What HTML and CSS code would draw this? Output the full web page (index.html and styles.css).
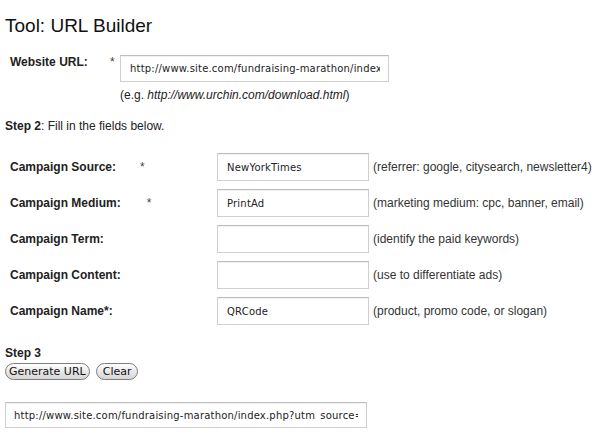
FILE: index.html
```html
<!DOCTYPE html>
<html lang="en">
<head>
    <meta charset="UTF-8">
    <title>Tool: URL Builder</title>
    <link rel="stylesheet" href="styles.css">
</head>
<body>
    <h1>Tool: URL Builder</h1>

    <div class="site-row">
        <label for="site-url" class="site-label">Website URL:</label>
        <span class="req">*</span>
        <input type="text" id="site-url" class="field site-field" value="http://www.site.com/fundraising-marathon/index.php">
    </div>
    <p class="example">(e.g. <i>http://www.urchin.com/download.html</i>)</p>

    <p class="step"><b>Step 2</b>: Fill in the fields below.</p>

    <div class="fields">
        <label class="name">Campaign Source:<span class="req req-source">*</span></label>
        <input type="text" class="field" value="NewYorkTimes">
        <span class="hint">(referrer: google, citysearch, newsletter4)</span>

        <label class="name">Campaign Medium:<span class="req req-medium">*</span></label>
        <input type="text" class="field" value="PrintAd">
        <span class="hint">(marketing medium: cpc, banner, email)</span>

        <label class="name">Campaign Term:</label>
        <input type="text" class="field" value="">
        <span class="hint">(identify the paid keywords)</span>

        <label class="name">Campaign Content:</label>
        <input type="text" class="field" value="">
        <span class="hint">(use to differentiate ads)</span>

        <label class="name">Campaign Name*:</label>
        <input type="text" class="field" value="QRCode">
        <span class="hint">(product, promo code, or slogan)</span>
    </div>

    <p class="step step3"><b>Step 3</b></p>
    <div class="buttons">
        <button type="button" class="btn">Generate URL</button>
        <button type="button" class="btn btn-clear">Clear</button>
    </div>

    <input type="text" class="field result" value="http://www.site.com/fundraising-marathon/index.php?utm_source=NewYorkTimes&amp;utm_medium=PrintAd&amp;utm_campaign=QRCode">
</body>
</html>
```

FILE: styles.css
```css
body {
    margin: 0;
    font-family: "Liberation Sans", Arial, sans-serif;
    font-size: 12px;
    line-height: 14px;
    color: #222;
    background: #fff;
}
h1 {
    margin: 14px 0 0 5px;
    font-size: 19px;
    font-weight: normal;
    line-height: 23px;
    color: #111;
}
.field {
    box-sizing: border-box;
    height: 28px;
    margin: 0;
    padding: 0 8px 0 9px;
    border: 1px solid #cfcfcf;
    border-top-color: #bdbdbd;
    box-shadow: inset 0 1px 1px rgba(0,0,0,0.06);
    background: #fff;
    font-family: "DejaVu Sans", sans-serif;
    font-size: 10px;
    line-height: 16px;
    letter-spacing: 0.2px;
    color: #222;
    outline: none;
}
.site-row {
    display: flex;
    align-items: flex-start;
    margin-top: 18px;
    padding-left: 10px;
}
.site-label {
    width: 100px;
    font-weight: bold;
}
.req {
    width: 10px;
    color: #444;
}
.site-field {
    width: 269px;
    height: 27px;
}
.example {
    margin: 6px 0 0 120px;
}
.step {
    margin: 17px 0 0 5px;
}
.fields {
    display: grid;
    grid-template-columns: 203px 152px auto;
    column-gap: 4px;
    row-gap: 8px;
    align-items: center;
    margin-top: 20px;
    padding-left: 10px;
}
.name {
    font-weight: bold;
}
.name .req {
    display: inline-block;
    font-weight: normal;
}
.req-source {
    margin-left: 24px;
}
.req-medium {
    margin-left: 26px;
}
.hint {
    color: #333;
    white-space: nowrap;
}
.step3 {
    margin-top: 21px;
}
.buttons {
    display: flex;
    gap: 6px;
    margin: 3px 0 0 5px;
}
.btn {
    height: 17px;
    padding: 0 3px;
    border: 1px solid #7d7d7d;
    border-radius: 9px;
    background: linear-gradient(#ffffff, #e4e4e4 60%, #d6d6d6);
    font-family: "DejaVu Sans", sans-serif;
    font-size: 11px;
    line-height: 15px;
    color: #111;
}
.btn-clear {
    padding: 0 6px;
}
.result {
    display: block;
    width: 362px;
    height: 26px;
    margin: 22px 0 0 5px;
    padding-left: 8px;
}
```
